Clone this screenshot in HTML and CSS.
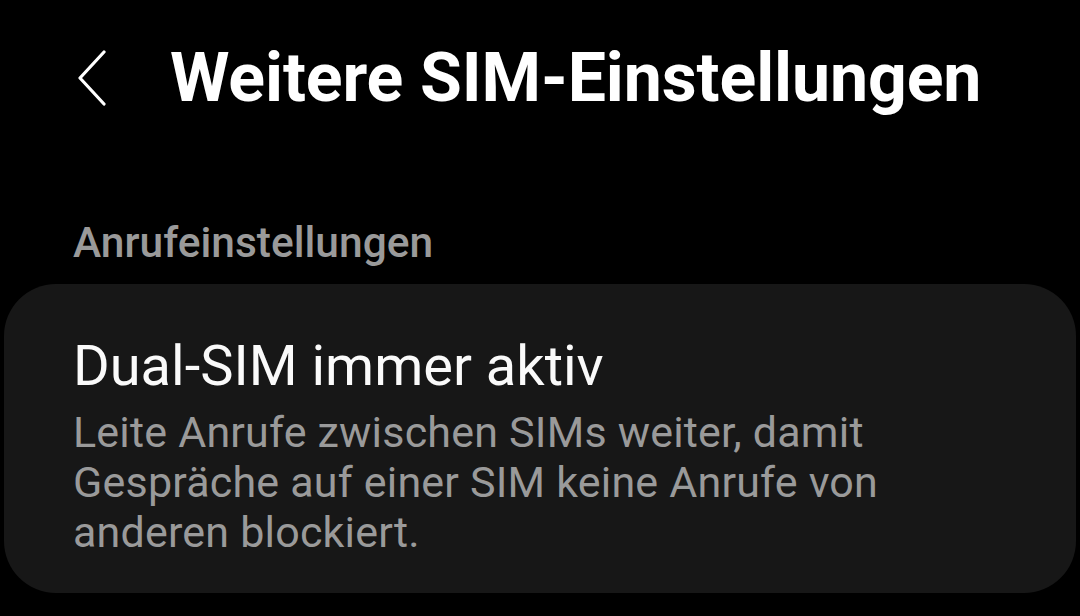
FILE: index.html
```html
<!DOCTYPE html>
<html lang="de">
<head>
  <meta charset="UTF-8" />
  <title>Weitere SIM-Einstellungen</title>
  <link rel="stylesheet" href="styles.css">
</head>
<body>
  <header class="topbar">
    <button class="back" aria-label="Zurück">
      <svg width="32" height="56" viewBox="0 0 32 56">
        <path d="M28 2 L4 28 L28 54" fill="none" stroke="#fff" stroke-width="3.2" stroke-linecap="round" stroke-linejoin="round"/>
      </svg>
    </button>
    <h1>Weitere SIM-Einstellungen</h1>
  </header>

  <div class="section-label">Anrufeinstellungen</div>

  <div class="card">
    <div class="item">
      <div class="item-title">Dual-SIM immer aktiv</div>
      <div class="item-desc">Leite Anrufe zwischen SIMs weiter, damit Gespräche auf einer SIM keine Anrufe von anderen blockiert.</div>
    </div>
  </div>
</body>
</html>
```

FILE: styles.css
```css
body {
  margin: 0;
  background-color: #000;
  font-family: Roboto, "Noto Sans", sans-serif;
  color: #fff;
  overflow: hidden;
}
.topbar {
  display: flex;
  align-items: center;
  height: 152px;
  padding: 3px 0 0 76px;
  box-sizing: border-box;
}
.back {
  background: none;
  border: none;
  padding: 0;
  margin: 0 62px 0 0;
  display: flex;
  cursor: pointer;
}
.topbar h1 {
  margin: 0;
  font-size: 68px;
  font-weight: 700;
  letter-spacing: -0.1px;
}
.section-label {
  padding: 66px 0 0 73px;
  font-size: 42.5px;
  font-weight: 500;
  color: #9a9a9a;
  line-height: 50px;
}
.card {
  margin: 16px 4px 0 4px;
  background-color: #171717;
  border-radius: 52px;
}
.item {
  padding: 50px 60px 36px 69px;
}
.item-title {
  font-size: 56px;
  line-height: 64px;
  color: #fafafa;
}
.item-desc {
  margin-top: 9px;
  font-size: 43px;
  letter-spacing: 0.2px;
  line-height: 50px;
  color: #9a9a9a;
  max-width: 900px;
}
```
